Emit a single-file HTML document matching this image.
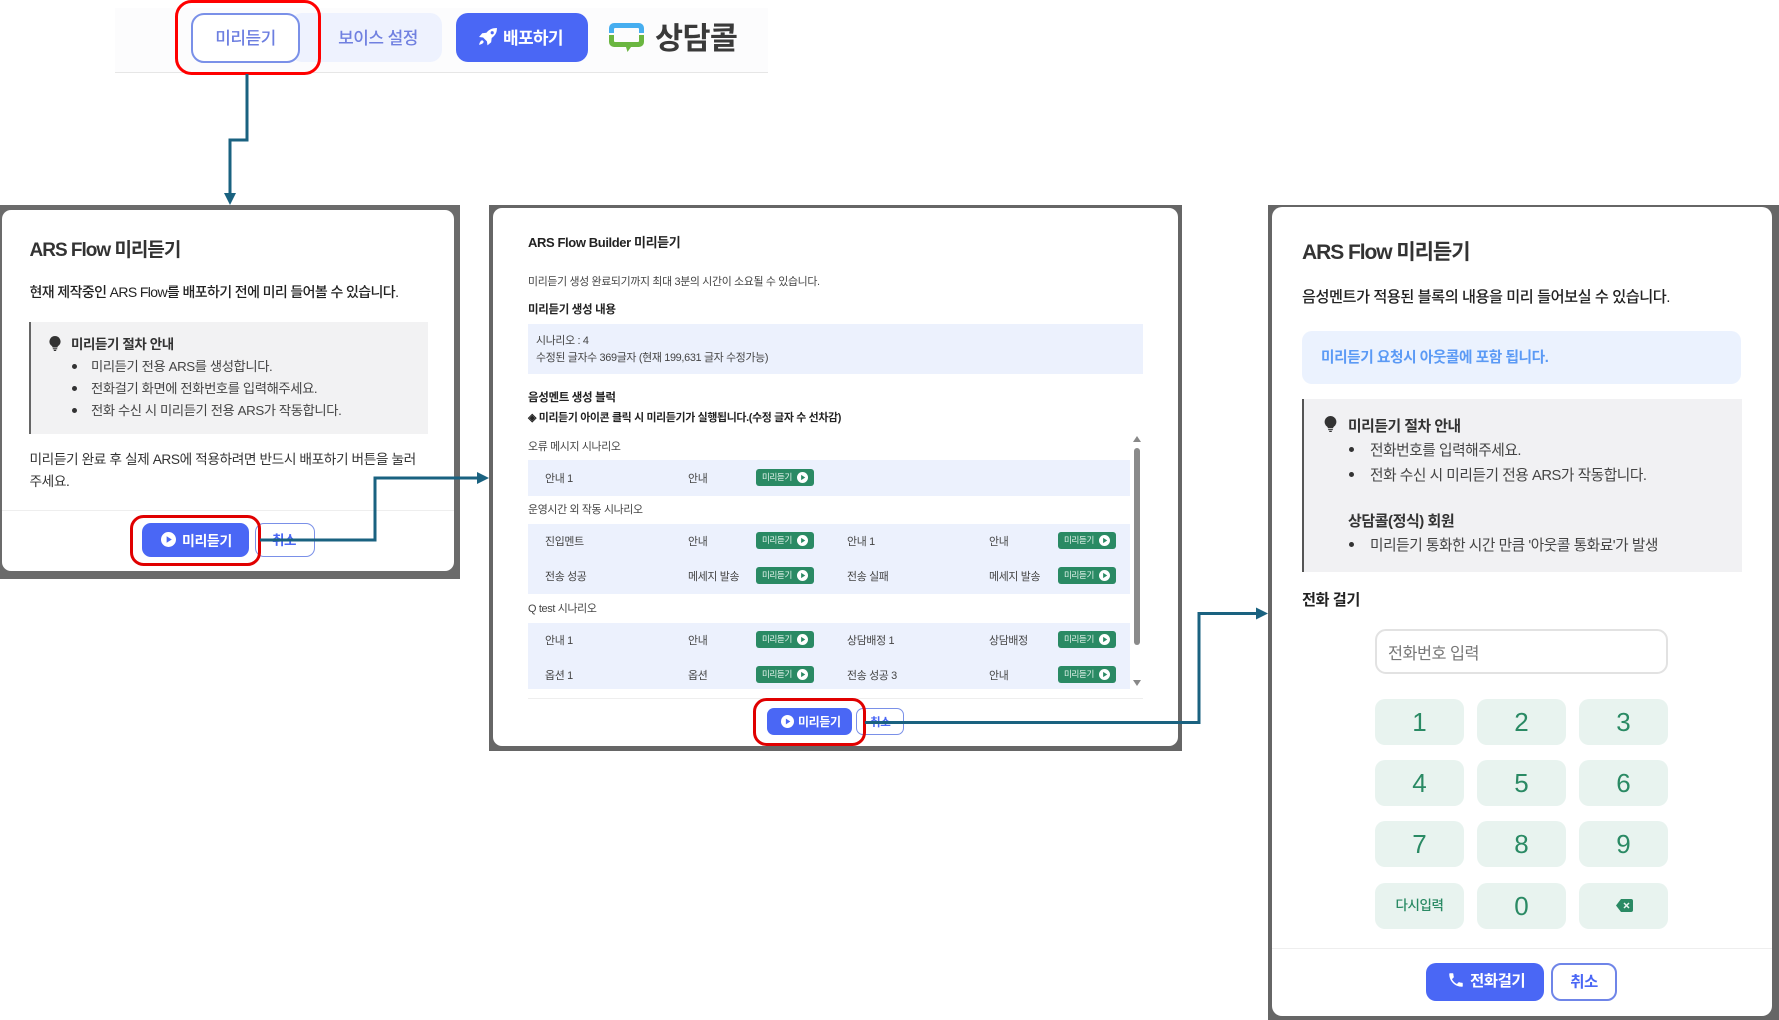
<!DOCTYPE html>
<html lang="ko"><head><meta charset="utf-8"><title>ARS Flow 미리듣기</title>
<style>
html,body{margin:0;padding:0;background:#fff;width:1779px;height:1020px;overflow:hidden}
body{position:relative;font-family:"Liberation Sans","Noto Sans CJK KR",sans-serif;color:#333;filter:blur(.35px)}
div,svg{position:absolute}
.t{white-space:nowrap;line-height:20px;height:20px;letter-spacing:-.03em}
.c{text-align:center}
.b{font-weight:700}
.btn{border-radius:9px;background:#4a67f5}
.cn{box-sizing:border-box;background:#fff;border:1px solid #7a90e8;border-radius:9px}
.row{background:#ecf1fd;left:528px;width:602px}
.s{font-size:10.9px;color:#444}
.g{background:#2a8a64;border-radius:3px;width:58px;height:17px}
.g span{position:absolute;left:6px;top:0;line-height:16px;font-size:8.5px;color:#e8f5ef;letter-spacing:-.04em;white-space:nowrap}
.g svg{left:41px;top:3px}
.k{background:#e8f3ef;border-radius:10px;width:89px;height:46px;line-height:46px;text-align:center;font-size:26px;color:#2a8a64}
.m1{font-size:13.3px;color:#444}
.m3{font-size:14.7px;color:#444}
</style></head><body>

<!-- toolbar -->
<div style="left:115px;top:8px;width:653px;height:64px;background:#fcfcfd;border-bottom:1px solid #e6e6e6"></div>
<div style="left:290px;top:13px;width:152px;height:49px;background:#eef2fe;border-radius:12px"></div>
<div class="t c" style="left:320px;width:116px;top:28.500px;font-size:17px;color:#7080e0;font-weight:500">보이스 설정</div>
<div style="box-sizing:border-box;left:191px;top:13px;width:109px;height:50px;background:#fff;border:2px solid #7a90e8;border-radius:13px"></div>
<div class="t c" style="left:191px;width:109px;top:28.500px;font-size:17px;color:#6c7ee0;font-weight:500">미리듣기</div>
<div style="left:456px;top:13px;width:132px;height:49px;background:#4a67f5;border-radius:12px"></div>
<svg style="left:478px;top:28px" width="20" height="19" viewBox="0 0 19 18"><path fill="#fff" fill-rule="evenodd" d="M18 0c-4.500 0-7.500 1.500-10 4.500L4 5 1 8.500l3.800.5 3.700 3.700.5 3.800L12.500 13.500l.5-4C16.500 7 18 4.500 18 0zM13.500 3a1.500 1.500 0 1 1 0 3 1.500 1.500 0 0 1 0-3z"/><path fill="#fff" d="M4 11.500c-1.500.5-2.500 2-3 4.500 2.500-.5 4-1.500 4.500-3z"/></svg>
<div class="t" style="left:503px;top:28.500px;font-size:17px;color:#fff;font-weight:700;letter-spacing:-.04em">배포하기</div>
<svg style="left:609px;top:23px" width="35" height="29" viewBox="0 0 35 29"><path fill="#46aef0" d="M5 0h25a5 5 0 0 1 5 5v5h-5V6a1 1 0 0 0-1-1H6a1 1 0 0 0-1 1v4H0V5a5 5 0 0 1 5-5z"/><path fill="#6ab640" d="M0 12h5v6a1 1 0 0 0 1 1h23a1 1 0 0 0 1-1v-6h5v7a5 5 0 0 1-5 5h-8l-3.500 5-1.500-5H5a5 5 0 0 1-5-5z"/></svg>
<div class="t b" style="left:655px;top:28px;font-size:30.500px;line-height:22px;color:#3a3a3a;letter-spacing:-.02em">상담콜</div>

<!-- modal 1 -->
<div style="left:0;top:205px;width:460px;height:374px;background:#6b6b6b"></div>
<div style="left:2px;top:210px;width:452px;height:361px;background:#fff;border-radius:9px"></div>
<div class="t" style="left:350px;top:199px;width:80px;height:11px;font-size:7px;color:#222;overflow:hidden"></div>
<div class="t b" style="left:29.500px;top:241px;font-size:19px;letter-spacing:-1px;color:#333">ARS Flow 미리듣기</div>
<div class="t" style="left:29.500px;top:282px;font-size:14px;letter-spacing:-.044em;color:#222;font-weight:500">현재 제작중인 ARS Flow를 배포하기 전에 미리 들어볼 수 있습니다.</div>
<div style="box-sizing:border-box;left:29px;top:322px;width:399px;height:112px;background:#f2f2f3;border-left:2px solid #666"></div>
<svg style="left:49px;top:336px" width="12" height="15" viewBox="0 0 12 15"><path fill="#333" d="M6 0a5.500 5.500 0 0 0-3.300 9.900c.5.400.8 1 .9 1.600h4.800c.1-.6.400-1.200.9-1.600A5.500 5.500 0 0 0 6 0zM3.800 12.300h4.400v1H3.800zM4.800 13.800h2.400V15H4.800z"/></svg>
<div class="t b" style="left:71px;top:335px;font-size:13.500px;color:#333">미리듣기 절차 안내</div>
<div style="left:72px;top:364px;width:5px;height:5px;border-radius:50%;background:#333"></div>
<div style="left:72px;top:386px;width:5px;height:5px;border-radius:50%;background:#333"></div>
<div style="left:72px;top:408px;width:5px;height:5px;border-radius:50%;background:#333"></div>
<div class="t m1" style="left:91px;top:357px">미리듣기 전용 ARS를 생성합니다.</div>
<div class="t m1" style="left:91px;top:379px">전화걸기 화면에 전화번호를 입력해주세요.</div>
<div class="t m1" style="left:91px;top:401px">전화 수신 시 미리듣기 전용 ARS가 작동합니다.</div>
<div class="t" style="left:29.500px;top:450px;font-size:13.700px;color:#333">미리듣기 완료 후 실제 ARS에 적용하려면 반드시 배포하기 버튼을 눌러</div>
<div class="t" style="left:29.500px;top:471.500px;font-size:13.700px;color:#333">주세요.</div>
<div style="left:2px;top:510px;width:452px;height:1px;background:#eee"></div>
<div class="btn" style="left:142px;top:523px;width:107px;height:34px"></div>
<svg style="left:161px;top:532px" width="15" height="15" viewBox="0 0 16 16"><circle cx="8" cy="8" r="8" fill="#fff"/><path fill="#4a67f5" d="M6 4.500v7L11.500 8z"/></svg>
<div class="t b" style="left:182px;top:530.500px;font-size:14px;color:#fff">미리듣기</div>
<div class="cn" style="left:255px;top:523px;width:60px;height:34px"></div>
<div class="t b" style="left:272px;top:531px;font-size:13.500px;color:#4a67f5">취소</div>

<!-- modal 2 -->
<div style="left:489px;top:205px;width:693px;height:546px;background:#666"></div>
<div style="left:493px;top:208px;width:685px;height:538px;background:#fff;border-radius:9px"></div>
<div class="t b" style="left:528px;top:233px;font-size:13px;color:#222">ARS Flow Builder 미리듣기</div>
<div class="t s" style="left:528px;top:271.500px">미리듣기 생성 완료되기까지 최대 3분의 시간이 소요될 수 있습니다.</div>
<div class="t b" style="left:528px;top:300px;font-size:11.500px;color:#222">미리듣기 생성 내용</div>
<div style="left:528px;top:324px;width:615px;height:50px;background:#ecf1fd"></div>
<div class="t s" style="left:536px;top:331px">시나리오 : 4</div>
<div class="t s" style="left:536px;top:347.500px">수정된 글자수 369글자 (현재 199,631 글자 수정가능)</div>
<div class="t b" style="left:528px;top:388px;font-size:11.500px;color:#222">음성멘트 생성 블럭</div>
<div class="t b" style="left:528px;top:408px;font-size:10.900px;color:#222">◈ 미리듣기 아이콘 클릭 시 미리듣기가 실행됩니다.(수정 글자 수 선차감)</div>
<div class="t s" style="left:528px;top:436.500px">오류 메시지 시나리오</div>
<div class="t s" style="left:528px;top:500px">운영시간 외 작동 시나리오</div>
<div class="t s" style="left:528px;top:599px">Q test 시나리오</div>
<div class="row" style="top:460px;height:36px"></div>
<div class="row" style="top:524px;height:70px"></div>
<div class="row" style="top:623px;height:66px"></div>
<svg style="left:1132px;top:436px" width="10" height="250" viewBox="0 0 10 250"><path fill="#888" d="M5 0l4 6H1zM5 250l4-6H1z"/><rect x="2" y="12" width="6" height="197" rx="3" fill="#8a8a8a"/></svg>

<!-- rows -->
<div class="t s" style="left:545px;top:469px">안내 1</div><div class="t s" style="left:688px;top:469px">안내</div>
<div class="g" style="left:756px;top:469px"><span>미리듣기</span><svg width="11" height="11" viewBox="0 0 12 12"><circle cx="6" cy="6" r="6" fill="#fff"/><path fill="#2a8a64" d="M4.500 3.200v5.600L9 6z"/></svg></div>

<div class="t s" style="left:545px;top:532px">진입멘트</div><div class="t s" style="left:688px;top:532px">안내</div>
<div class="g" style="left:756px;top:532px"><span>미리듣기</span><svg width="11" height="11" viewBox="0 0 12 12"><circle cx="6" cy="6" r="6" fill="#fff"/><path fill="#2a8a64" d="M4.500 3.200v5.600L9 6z"/></svg></div>
<div class="t s" style="left:847px;top:532px">안내 1</div><div class="t s" style="left:989px;top:532px">안내</div>
<div class="g" style="left:1058px;top:532px"><span>미리듣기</span><svg width="11" height="11" viewBox="0 0 12 12"><circle cx="6" cy="6" r="6" fill="#fff"/><path fill="#2a8a64" d="M4.500 3.200v5.600L9 6z"/></svg></div>

<div class="t s" style="left:545px;top:567px">전송 성공</div><div class="t s" style="left:688px;top:567px">메세지 발송</div>
<div class="g" style="left:756px;top:567px"><span>미리듣기</span><svg width="11" height="11" viewBox="0 0 12 12"><circle cx="6" cy="6" r="6" fill="#fff"/><path fill="#2a8a64" d="M4.500 3.200v5.600L9 6z"/></svg></div>
<div class="t s" style="left:847px;top:567px">전송 실패</div><div class="t s" style="left:989px;top:567px">메세지 발송</div>
<div class="g" style="left:1058px;top:567px"><span>미리듣기</span><svg width="11" height="11" viewBox="0 0 12 12"><circle cx="6" cy="6" r="6" fill="#fff"/><path fill="#2a8a64" d="M4.500 3.200v5.600L9 6z"/></svg></div>

<div class="t s" style="left:545px;top:630.500px">안내 1</div><div class="t s" style="left:688px;top:630.500px">안내</div>
<div class="g" style="left:756px;top:631px"><span>미리듣기</span><svg width="11" height="11" viewBox="0 0 12 12"><circle cx="6" cy="6" r="6" fill="#fff"/><path fill="#2a8a64" d="M4.500 3.200v5.600L9 6z"/></svg></div>
<div class="t s" style="left:847px;top:630.500px">상담배정 1</div><div class="t s" style="left:989px;top:630.500px">상담배정</div>
<div class="g" style="left:1058px;top:631px"><span>미리듣기</span><svg width="11" height="11" viewBox="0 0 12 12"><circle cx="6" cy="6" r="6" fill="#fff"/><path fill="#2a8a64" d="M4.500 3.200v5.600L9 6z"/></svg></div>

<div class="t s" style="left:545px;top:665.500px">옵션 1</div><div class="t s" style="left:688px;top:665.500px">옵션</div>
<div class="g" style="left:756px;top:666px"><span>미리듣기</span><svg width="11" height="11" viewBox="0 0 12 12"><circle cx="6" cy="6" r="6" fill="#fff"/><path fill="#2a8a64" d="M4.500 3.200v5.600L9 6z"/></svg></div>
<div class="t s" style="left:847px;top:665.500px">전송 성공 3</div><div class="t s" style="left:989px;top:665.500px">안내</div>
<div class="g" style="left:1058px;top:666px"><span>미리듣기</span><svg width="11" height="11" viewBox="0 0 12 12"><circle cx="6" cy="6" r="6" fill="#fff"/><path fill="#2a8a64" d="M4.500 3.200v5.600L9 6z"/></svg></div>

<div style="left:528px;top:698px;width:615px;height:1px;background:#eee"></div>
<div class="btn" style="left:767px;top:708px;width:85px;height:27px;border-radius:7px"></div>
<svg style="left:781px;top:715px" width="13" height="13" viewBox="0 0 16 16"><circle cx="8" cy="8" r="8" fill="#fff"/><path fill="#4a67f5" d="M6 4.500v7L11.500 8z"/></svg>
<div class="t b" style="left:798px;top:711.500px;font-size:12px;color:#fff">미리듣기</div>
<div class="cn" style="left:856px;top:708px;width:48px;height:27px;border-radius:7px"></div>
<div class="t b" style="left:870px;top:712.500px;font-size:11.500px;color:#4a67f5">취소</div>

<!-- modal 3 -->
<div style="left:1268px;top:205px;width:511px;height:815px;background:#666"></div>
<div style="left:1272px;top:207px;width:500px;height:809px;background:#fff;border-radius:10px"></div>
<div class="t b" style="left:1302px;top:242.500px;font-size:21px;letter-spacing:-.05em;color:#333">ARS Flow 미리듣기</div>
<div class="t" style="left:1302px;top:287.500px;font-size:15.200px;color:#222;font-weight:500">음성멘트가 적용된 블록의 내용을 미리 들어보실 수 있습니다.</div>
<div style="left:1302px;top:331px;width:439px;height:53px;background:#ebf2fe;border-radius:10px"></div>
<div class="t b" style="left:1321px;top:348px;font-size:14.700px;color:#5b9af5">미리듣기 요청시 아웃콜에 포함 됩니다.</div>
<div style="box-sizing:border-box;left:1302px;top:399px;width:440px;height:173px;background:#f1f1f3;border-left:2px solid #555"></div>
<svg style="left:1324px;top:416px" width="13" height="16" viewBox="0 0 12 15"><path fill="#333" d="M6 0a5.500 5.500 0 0 0-3.300 9.900c.5.400.8 1 .9 1.600h4.800c.1-.6.400-1.200.9-1.600A5.500 5.500 0 0 0 6 0zM3.800 12.300h4.400v1H3.800zM4.800 13.800h2.400V15H4.800z"/></svg>
<div class="t b" style="left:1348px;top:416.500px;font-size:14.800px;color:#333">미리듣기 절차 안내</div>
<div style="left:1349px;top:447px;width:5px;height:5px;border-radius:50%;background:#333"></div>
<div style="left:1349px;top:472px;width:5px;height:5px;border-radius:50%;background:#333"></div>
<div style="left:1349px;top:542px;width:5px;height:5px;border-radius:50%;background:#333"></div>
<div class="t m3" style="left:1370px;top:440.500px">전화번호를 입력해주세요.</div>
<div class="t m3" style="left:1370px;top:465.500px">전화 수신 시 미리듣기 전용 ARS가 작동합니다.</div>
<div class="t b" style="left:1348px;top:511.500px;font-size:15px;color:#333">상담콜(정식) 회원</div>
<div class="t m3" style="left:1370px;top:535.500px">미리듣기 통화한 시간 만큼 '아웃콜 통화료'가 발생</div>
<div class="t b" style="left:1302px;top:591px;font-size:15.200px;color:#222">전화 걸기</div>
<div style="box-sizing:border-box;left:1375px;top:629px;width:293px;height:45px;background:#fff;border:2px solid #e2e2e2;border-radius:11px"></div>
<div class="t" style="left:1388px;top:643.500px;font-size:16.300px;color:#777">전화번호 입력</div>
<div class="k" style="left:1375px;top:699px">1</div><div class="k" style="left:1477px;top:699px">2</div><div class="k" style="left:1579px;top:699px">3</div>
<div class="k" style="left:1375px;top:760px">4</div><div class="k" style="left:1477px;top:760px">5</div><div class="k" style="left:1579px;top:760px">6</div>
<div class="k" style="left:1375px;top:821px">7</div><div class="k" style="left:1477px;top:821px">8</div><div class="k" style="left:1579px;top:821px">9</div>
<div class="k" style="left:1375px;top:883px;font-size:13.500px;font-weight:500;letter-spacing:-.03em">다시입력</div><div class="k" style="left:1477px;top:883px">0</div><div class="k" style="left:1579px;top:883px"></div>
<svg style="left:1616px;top:899px" width="17" height="13" viewBox="0 0 17 13"><path fill="#2a8a64" d="M5 0h10a2 2 0 0 1 2 2v9a2 2 0 0 1-2 2H5L0 6.500z"/><path stroke="#e8f3ef" stroke-width="1.500" d="M8 4l5 5M13 4l-5 5"/></svg>
<div style="left:1272px;top:948px;width:500px;height:1px;background:#eee"></div>
<div class="btn" style="left:1426px;top:963px;width:118px;height:38px;border-radius:10px"></div>
<svg style="left:1447px;top:971px" width="18" height="18" viewBox="0 0 24 24"><path fill="#fff" d="M6.600 10.800c1.400 2.800 3.800 5.100 6.600 6.600l2.200-2.200c.3-.3.700-.4 1-.2 1.100.4 2.300.6 3.600.6.600 0 1 .4 1 1V20c0 .6-.4 1-1 1C10.600 21 3 13.400 3 4c0-.6.400-1 1-1h3.500c.6 0 1 .4 1 1 0 1.300.2 2.500.6 3.600.1.300 0 .7-.2 1z"/></svg>
<div class="t b" style="left:1470px;top:972px;font-size:15.500px;color:#fff">전화걸기</div>
<div style="box-sizing:border-box;left:1551px;top:963px;width:66px;height:38px;background:#fff;border:2px solid #6f85e8;border-radius:10px"></div>
<div class="t b c" style="left:1551px;width:66px;top:973px;font-size:15.500px;color:#4a67f5">취소</div>

<!-- connectors and highlights -->
<svg style="left:0;top:0;z-index:5" width="1779" height="1020" viewBox="0 0 1779 1020" fill="none">
<rect x="176.500" y="1.500" width="143" height="72" rx="15" stroke="#f00" stroke-width="3"/>
<rect x="131.500" y="516.500" width="128" height="48" rx="12" stroke="#e00000" stroke-width="3"/>
<rect x="754.500" y="699.500" width="110" height="45" rx="12" stroke="#e00000" stroke-width="3"/>
<g stroke="#1a6280" stroke-width="3">
<path d="M247 74V140H230V195"/>
<path d="M260 540H375V478H479"/>
<path d="M865 722.500H1199V613.500H1258"/>
</g>
<g fill="#1a6280">
<path d="M224 193h12l-6 12z"/>
<path d="M477 472v12l12-6z"/>
<path d="M1256 607.500v12l12-6z"/>
</g>
</svg>
</body></html>
